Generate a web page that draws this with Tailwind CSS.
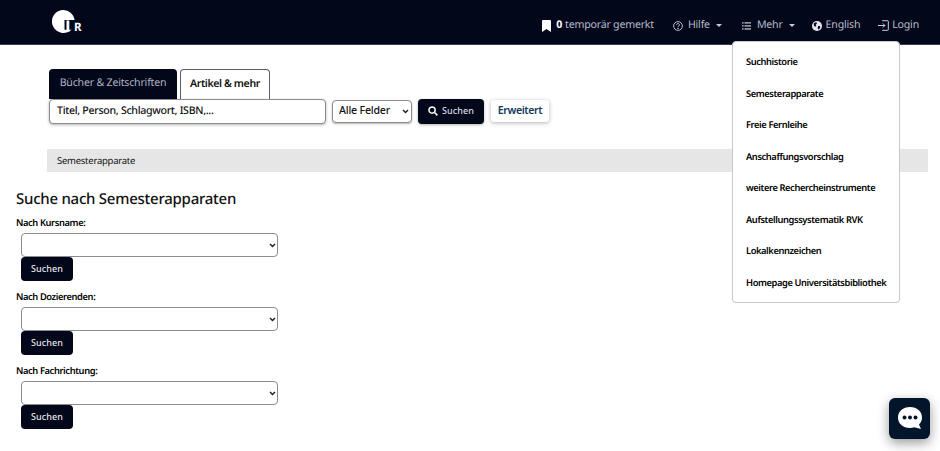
<!DOCTYPE html>
<html lang="de">
<head>
    <meta charset="UTF-8">
    <title>Semesterapparate</title>
    <script src="https://cdn.jsdelivr.net/npm/@tailwindcss/browser@4"></script>
</head>
<body class="bg-white h-[451px] overflow-hidden relative font-['Noto_Sans',sans-serif] text-[#111] [text-rendering:geometricPrecision]">
    <!-- Kopfzeile -->
    <header class="h-[45px] bg-[#03071a] border-b border-[#3a3d52] flex items-center justify-between pl-[52px] pr-[21px]">
        <div class="flex items-end h-[23px] mt-[-1px]">
            <svg width="24" height="23" viewBox="0 0 24 23"><path d="M11.500 0A11.500 11.500 0 1 0 19.500 19.700L12.500 19.700L12.500 10L22.700 10A11.500 11.500 0 0 0 11.500 0Z" fill="#fff"/><rect x="14.500" y="10.500" width="2.800" height="11" fill="#fff"/></svg>
            <span class="text-white font-bold text-[11.500px] leading-[12px] ml-[-2px] mb-[-1px]">R</span>
        </div>
        <nav class="flex items-center text-[10.600px] tracking-[-0.2px] text-[#b9bccb] h-full pt-[8px]">
            <a class="flex items-center">
                <svg class="mr-[5px]" width="9" height="12" viewBox="0 0 9 12"><path d="M0 1a1 1 0 0 1 1-1h7a1 1 0 0 1 1 1v11L4.500 9 0 12Z" fill="#fff"/></svg>
                <b class="text-white mr-[3px]">0</b>temporär gemerkt
            </a>
            <a class="flex items-center ml-[19px]">
                <svg class="mr-[5px]" width="10" height="10" viewBox="0 0 16 16" fill="none" stroke="#d5d7e0" stroke-width="1.400"><circle cx="8" cy="8" r="7"/><path d="M5.800 6.200a2.200 2.200 0 1 1 3.400 1.800c-.8.500-1.200 1-1.200 1.800"/><circle cx="8" cy="12" r=".5" fill="#d5d7e0"/></svg>
                Hilfe
                <span class="ml-[6px] w-0 h-0 border-x-[3px] border-x-transparent border-t-[3.500px] border-t-[#c8cad6]"></span>
            </a>
            <a class="flex items-center ml-[20px]">
                <svg class="mr-[6px]" width="9" height="8" viewBox="0 0 11 9" fill="#d5d7e0"><rect x="0" y="0" width="2" height="1.400"/><rect x="0" y="3.700" width="2" height="1.400"/><rect x="0" y="7.400" width="2" height="1.400"/><rect x="3" y="0" width="8" height="1.400"/><rect x="3" y="3.700" width="8" height="1.400"/><rect x="3" y="7.400" width="8" height="1.400"/></svg>
                Mehr
                <span class="ml-[6px] w-0 h-0 border-x-[3px] border-x-transparent border-t-[3.500px] border-t-[#c8cad6]"></span>
            </a>
            <a class="flex items-center ml-[17px]">
                <svg class="mr-[4px]" width="10" height="10" viewBox="0 0 16 16"><circle cx="8" cy="8" r="8" fill="#e6e7ee"/><path d="M3 3l4-1 1 2-2 2 1 2-2 1-2-2ZM10 8l3 0 0 3-3 3-1-3Z" fill="#03071a"/></svg>
                English
            </a>
            <a class="flex items-center ml-[18px]">
                <svg class="mr-[3px]" width="11" height="11" viewBox="0 0 16 16" fill="none" stroke="#d5d7e0" stroke-width="1.400"><path d="M6 1h8a1 1 0 0 1 1 1v12a1 1 0 0 1-1 1H6"/><path d="M0 8h10M7 5l3 3-3 3"/></svg>
                Login
            </a>
        </nav>
    </header>

    <main>
        <!-- Suchbereich -->
        <section class="pl-[49px] pt-[24px]">
            <div class="flex gap-[3px] items-end h-[30px]">
                <div class="w-[128px] h-[30px] bg-[#03071a] rounded-t-[4px] text-[#b0b3c6] text-[10.600px] tracking-[-0.2px] flex items-center justify-center">Bücher &amp; Zeitschriften</div>
                <div class="w-[90px] h-[30px] bg-white border border-b-0 border-[#5a5d70] rounded-t-[4px] text-[10.600px] tracking-[-0.4px] font-semibold flex items-center justify-center">Artikel &amp; mehr</div>
            </div>
            <div class="flex items-center mt-[-1px] h-[26px]">
                <div class="w-[277px] h-[25px] bg-white border border-[#8c8c8c] rounded-[4px] shadow-[0_1px_3px_rgba(0,0,0,0.3)] text-[10.600px] tracking-[-0.3px] font-medium leading-[23px] px-[7px]">Titel, Person, Schlagwort, ISBN,...</div>
                <div class="relative ml-[6px]">
                    <select class="block appearance-none w-[80px] h-[23px] bg-white border border-[#8c8c8c] rounded-[4px] shadow-[0_1px_2px_rgba(0,0,0,0.3)] text-[10.600px] tracking-[-0.2px] font-medium pl-[6px]"><option>Alle Felder</option></select>
                    <svg class="absolute right-[3px] top-[9px]" width="7" height="5" viewBox="0 0 7 5" fill="none" stroke="#222" stroke-width="1.500"><path d="M1 1l2.500 2.500L6 1"/></svg>
                </div>
                <button class="ml-[6px] w-[66px] h-[25px] bg-[#03071a] rounded-[4px] text-[#d9dbe5] text-[9px] font-medium tracking-[0.1px] flex items-center justify-center shadow-[0_1px_3px_rgba(0,0,0,0.3)]">
                    <svg class="mr-[4px]" width="10" height="10" viewBox="0 0 16 16" fill="none" stroke="#fff" stroke-width="2.400"><circle cx="6.500" cy="6.500" r="5"/><path d="M10.500 10.500L15 15"/></svg>
                    Suchen
                </button>
                <button class="ml-[7px] w-[58px] h-[22px] bg-white rounded-[3px] text-[#123a5e] text-[10.600px] tracking-[-0.4px] font-semibold shadow-[0_1px_4px_rgba(0,0,0,0.3)]">Erweitert</button>
            </div>
        </section>

        <div class="ml-[47px] mr-[12px] mt-[25px] h-[23px] bg-[#e6e6e6] text-[9.500px] tracking-[-0.25px] leading-[23px] pl-[10px]">Semesterapparate</div>

        <!-- Formulare -->
        <section class="pl-[16px] pt-[16px]">
            <h2 class="text-[15px] tracking-[-0.25px] font-medium leading-[22px] mb-[2px]">Suche nach Semesterapparaten</h2>
            <form class="flex flex-col gap-[5px]">
                <div>
                    <label class="block text-[9.300px] text-black tracking-[-0.38px] font-semibold leading-[21px] h-[21px]">Nach Kursname:</label>
                    <div class="relative ml-[5px] w-[257px]">
                        <select class="block appearance-none w-full h-[24px] bg-white border border-[#8c8c8c] rounded-[4px]"></select>
                        <svg class="absolute right-[2px] top-[10px]" width="7" height="5" viewBox="0 0 7 5" fill="none" stroke="#222" stroke-width="1.500"><path d="M1 1l2.500 2.500L6 1"/></svg>
                    </div>
                    <button type="button" class="block ml-[5px] w-[52px] h-[24px] bg-[#03071a] rounded-[4px] text-[#e3e4ec] text-[9px] font-medium tracking-[0.1px]">Suchen</button>
                </div>
                <div>
                    <label class="block text-[9.300px] text-black tracking-[-0.38px] font-semibold leading-[21px] h-[21px]">Nach Dozierenden:</label>
                    <div class="relative ml-[5px] w-[257px]">
                        <select class="block appearance-none w-full h-[24px] bg-white border border-[#8c8c8c] rounded-[4px]"></select>
                        <svg class="absolute right-[2px] top-[10px]" width="7" height="5" viewBox="0 0 7 5" fill="none" stroke="#222" stroke-width="1.500"><path d="M1 1l2.500 2.500L6 1"/></svg>
                    </div>
                    <button type="button" class="block ml-[5px] w-[52px] h-[24px] bg-[#03071a] rounded-[4px] text-[#e3e4ec] text-[9px] font-medium tracking-[0.1px]">Suchen</button>
                </div>
                <div>
                    <label class="block text-[9.300px] text-black tracking-[-0.38px] font-semibold leading-[21px] h-[21px]">Nach Fachrichtung:</label>
                    <div class="relative ml-[5px] w-[257px]">
                        <select class="block appearance-none w-full h-[24px] bg-white border border-[#8c8c8c] rounded-[4px]"></select>
                        <svg class="absolute right-[2px] top-[10px]" width="7" height="5" viewBox="0 0 7 5" fill="none" stroke="#222" stroke-width="1.500"><path d="M1 1l2.500 2.500L6 1"/></svg>
                    </div>
                    <button type="button" class="block ml-[5px] w-[52px] h-[24px] bg-[#03071a] rounded-[4px] text-[#e3e4ec] text-[9px] font-medium tracking-[0.1px]">Suchen</button>
                </div>
            </form>
        </section>
    </main>

    <!-- Menü "Mehr" -->
    <ul class="absolute left-[732px] top-[41px] w-[168px] h-[262px] bg-white border border-[#c8c8c8] rounded-[4px] flex flex-col justify-between pt-[11px] pb-[10px] pl-[13px] text-[9.300px] text-black tracking-[-0.4px] font-semibold whitespace-nowrap">
        <li class="leading-[18px]">Suchhistorie</li>
        <li class="leading-[18px]">Semesterapparate</li>
        <li class="leading-[18px]">Freie Fernleihe</li>
        <li class="leading-[18px]">Anschaffungsvorschlag</li>
        <li class="leading-[18px]">weitere Rechercheinstrumente</li>
        <li class="leading-[18px]">Aufstellungssystematik RVK</li>
        <li class="leading-[18px]">Lokalkennzeichen</li>
        <li class="leading-[18px]">Homepage Universitätsbibliothek</li>
    </ul>

    <!-- Chat -->
    <div class="absolute left-[889px] top-[398px] w-[41px] h-[41px] bg-[#03152b] rounded-[6px] shadow-[0_4px_12px_rgba(0,0,0,0.4)] flex items-center justify-center">
        <svg width="26" height="25" viewBox="0 0 26 25"><path d="M13 1C6 1 1 5.500 1 11.500S6 22 13 22c1.500 0 3-.2 4.300-.7L24 23l-2-4.500c2-1.800 3-4.300 3-7C25 5.500 20 1 13 1Z" fill="#fff"/><circle cx="7.500" cy="11.500" r="2" fill="#03152b"/><circle cx="13" cy="11.500" r="2" fill="#03152b"/><circle cx="18.500" cy="11.500" r="2" fill="#03152b"/></svg>
    </div>
</body>
</html>
